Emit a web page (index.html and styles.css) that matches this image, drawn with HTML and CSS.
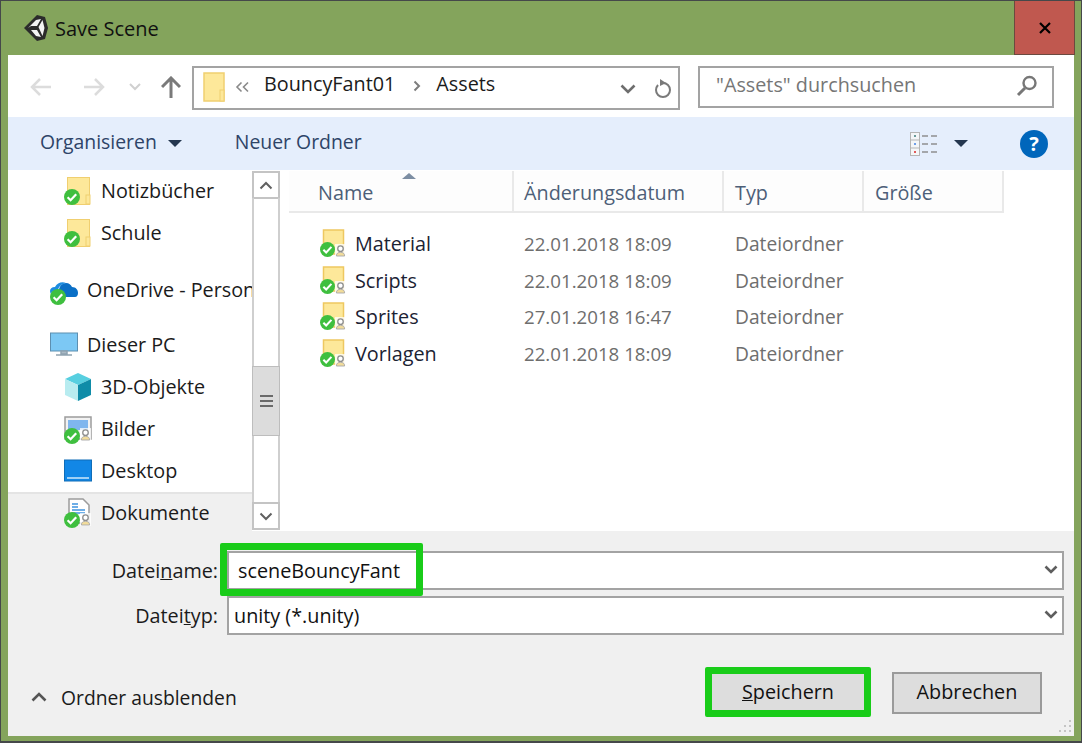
FILE: index.html
```html
<!DOCTYPE html>
<html lang="de">
<head>
    <meta charset="UTF-8">
    <title>Save Scene</title>
    <link rel="stylesheet" href="styles.css">
</head>
<body>

<svg class="defs" width="0" height="0">
    <defs>
        <symbol id="check" viewBox="0 0 16 16">
            <circle cx="8" cy="8" r="8" fill="#3fbf3f"/>
            <path d="M3.6 8.2l3 3 5.6-6" fill="none" stroke="#fff" stroke-width="2.2"/>
        </symbol>
        <symbol id="person" viewBox="0 0 12 14">
            <rect x="0" y="0" width="12" height="14" fill="#fff" opacity=".8"/>
            <circle cx="6" cy="5" r="3" fill="#fff" stroke="#8c8c8c" stroke-width="1.4"/>
            <path d="M1.5 13c0-3 2-4 4.500-4s4.500 1 4.500 4z" fill="#f2dc9a" stroke="#a8a8a8"/>
        </symbol>
        <symbol id="folder-nav" viewBox="0 0 28 30">
            <rect x="3.500" y="1.500" width="22" height="27" fill="#fde89a" stroke="#f0cf70"/>
            <rect x="22" y="19" width="4" height="9" fill="#fde89a" stroke="#f0cf70"/>
            <use href="#check" x="0" y="13" width="16" height="16"/>
        </symbol>
        <symbol id="folder-list" viewBox="0 0 28 30">
            <rect x="4.500" y="1" width="20" height="24" fill="#fde89a" stroke="#eec860" stroke-width="1.500"/>
            <use href="#check" x="1" y="13" width="15" height="15"/>
            <use href="#person" x="16" y="15" width="11" height="13"/>
        </symbol>
    </defs>
</svg>

<div class="window">
    <header class="titlebar">
        <svg class="unity-logo" viewBox="0 0 26 28">
            <path d="M14 1l8 2 3 11-3 11-8 2-13-13z" fill="#2b2b2b"/>
            <path d="M5 14l8-8 5-1-4 7H8zM8 16h6l4 7-5-1zM15.500 13l4-7 2 8-2 8z" fill="#f4f4f4"/>
        </svg>
        <span class="title">Save Scene</span>
        <button class="close-btn">
            <svg viewBox="0 0 12 12" width="12" height="12"><path d="M1 1l10 10M11 1L1 11" stroke="#000" stroke-width="2.200"/></svg>
        </button>
    </header>

    <div class="dialog">
        <div class="navbar">
            <svg class="nav-icon nav-back" viewBox="0 0 22 18"><path d="M21 9H2M10 1L2 9l8 8" fill="none" stroke="#dcdcdc" stroke-width="2.500"/></svg>
            <svg class="nav-icon nav-forward" viewBox="0 0 22 18"><path d="M1 9h19M12 1l8 8-8 8" fill="none" stroke="#dcdcdc" stroke-width="2.500"/></svg>
            <svg class="nav-icon nav-recent" viewBox="0 0 12 8"><path d="M1 1l5 5 5-5" fill="none" stroke="#d0d0d0" stroke-width="2"/></svg>
            <svg class="nav-icon nav-up" viewBox="0 0 20 22"><path d="M10 22V3M1 11l9-9 9 9" fill="none" stroke="#7a7a7a" stroke-width="3"/></svg>

            <div class="address">
                <svg class="address-folder" viewBox="0 0 22 30">
                    <rect x="1" y="1" width="20" height="28" fill="#fde89a" stroke="#f0cf70" stroke-width="1.500"/>
                    <rect x="17" y="18" width="4" height="11" fill="#fde89a" stroke="#f0cf70"/>
                </svg>
                <svg class="crumb-more" viewBox="0 0 15 12"><path d="M6.500 1.500L2 6l4.500 4.500M13 1.500L8.500 6l4.500 4.500" fill="none" stroke="#8a8a8a" stroke-width="1.600"/></svg>
                <span class="crumb">BouncyFant01</span>
                <svg class="crumb-sep" viewBox="0 0 8 12"><path d="M1.500 1.500L6 6l-4.500 4.500" fill="none" stroke="#7d7d7d" stroke-width="2"/></svg>
                <span class="crumb">Assets</span>
                <svg class="address-chevron" viewBox="0 0 16 10"><path d="M1.500 1.500L8 8l6.500-6.500" fill="none" stroke="#6e6e6e" stroke-width="2.600"/></svg>
                <svg class="address-refresh" viewBox="0 0 18 20"><path d="M9 5a7 7 0 1 1-7 7c0-2 .7-3.500 2-5" fill="none" stroke="#7a7a7a" stroke-width="2"/><path d="M6 1l6 4-6 3z" fill="#7a7a7a"/></svg>
            </div>

            <div class="search">
                <span>"Assets" durchsuchen</span>
                <svg class="search-icon" viewBox="0 0 22 22"><circle cx="13.500" cy="8" r="6" fill="none" stroke="#777" stroke-width="2.400"/><path d="M9 13l-7 7" stroke="#777" stroke-width="3"/></svg>
            </div>
        </div>

        <div class="toolbar">
            <span class="tool">Organisieren</span>
            <span class="caret caret-org"></span>
            <span class="tool tool-new">Neuer Ordner</span>
            <svg class="view-icon" viewBox="0 0 28 24">
                <rect x=".5" y=".5" width="9" height="23" fill="#f4f6f8" stroke="#b5b5b5"/>
                <path d="M1 8h8M1 16h8" stroke="#b5b5b5"/>
                <rect x="4" y="3" width="2" height="2" fill="#6a9a9a"/>
                <rect x="4" y="11" width="2" height="2" fill="#6f9ee8"/>
                <rect x="4" y="19" width="2" height="2" fill="#e05a5a"/>
                <path d="M12 4h6M21 4h6M12 12h6M21 12h6M12 20h6M21 20h6" stroke="#8f8f8f" stroke-width="1.500"/>
            </svg>
            <span class="caret caret-view"></span>
            <span class="help">?</span>
        </div>

        <div class="main">
            <nav class="sidebar">
                <div class="side-row sub"><svg class="side-icon"><use href="#folder-nav"/></svg>Notizbücher</div>
                <div class="side-row sub"><svg class="side-icon"><use href="#folder-nav"/></svg>Schule</div>
                <div class="side-row top onedrive">
                    <svg class="side-icon" viewBox="0 0 28 30">
                        <path d="M9 18c-1-6 3-10 7-10 3 0 5 2 6 4 4 0 6 3 6 6 0 2-1 4-3 4H10z" fill="#0a6fc6"/>
                        <path d="M5 12c2-4 7-6 11-4-4 1-7 3-8 7-3 0-6 1-7 4-2-3-1-7 4-7z" fill="#1d8ce0"/>
                        <use href="#check" x="0" y="14" width="16" height="16"/>
                    </svg>OneDrive - Personal
                </div>
                <div class="side-row top pc">
                    <svg class="side-icon" viewBox="0 0 28 30">
                        <rect x="0.500" y="3" width="27" height="18" fill="#7cc8f4" stroke="#5d8fb0"/>
                        <path d="M11 21h6v3h-6zM6 25h16" fill="#a9b8c4" stroke="#8fa2b0" stroke-width="1.500"/>
                    </svg>Dieser PC
                </div>
                <div class="side-row sub">
                    <svg class="side-icon" viewBox="0 0 28 30">
                        <path d="M14 1l13 6-13 6L1 7z" fill="#57cfe0"/>
                        <path d="M1 7l13 6v16L1 23z" fill="#b8ecf0"/>
                        <path d="M27 7l-13 6v16l13-6z" fill="#0f8ca8"/>
                    </svg>3D-Objekte
                </div>
                <div class="side-row sub">
                    <svg class="side-icon" viewBox="0 0 28 30">
                        <rect x="1" y="3" width="26" height="22" fill="#f2f2f2" stroke="#9c9c9c" stroke-width="1.500"/>
                        <rect x="4" y="6" width="20" height="10" fill="#7fb6ee"/>
                        <use href="#person" x="16" y="14" width="11" height="13"/>
                        <use href="#check" x="0" y="14" width="16" height="16"/>
                    </svg>Bilder
                </div>
                <div class="side-row sub">
                    <svg class="side-icon" viewBox="0 0 28 30">
                        <rect x="0.500" y="4" width="27" height="21" fill="#1287e6" stroke="#0f6db8"/>
                        <path d="M3 22h22" stroke="#cfe8fb" stroke-width="1.500"/>
                    </svg>Desktop
                </div>
                <div class="side-row sub selected">
                    <svg class="side-icon" viewBox="0 0 28 30">
                        <path d="M5 1h14l6 6v18H5z" fill="#fff" stroke="#9c9c9c" stroke-width="1.500"/>
                        <path d="M8 6h6M8 9h6M8 12h13M8 15h13" stroke="#3f94e0" stroke-width="1.500"/>
                        <use href="#person" x="16" y="15" width="11" height="13"/>
                        <use href="#check" x="0" y="14" width="16" height="16"/>
                    </svg>Dokumente
                </div>
            </nav>

            <div class="scrollbar">
                <div class="scroll-btn">
                    <svg viewBox="0 0 14 9" width="14" height="9"><path d="M1.500 7.500L7 2l5.500 5.500" fill="none" stroke="#606060" stroke-width="2"/></svg>
                </div>
                <div class="scroll-track">
                    <div class="scroll-thumb"><span></span><span></span><span></span></div>
                </div>
                <div class="scroll-btn">
                    <svg viewBox="0 0 14 9" width="14" height="9"><path d="M1.500 1.500L7 7l5.500-5.500" fill="none" stroke="#606060" stroke-width="2"/></svg>
                </div>
            </div>

            <section class="files">
                <div class="file-grid file-head">
                    <div class="col-head">Name<span class="sort-arrow"></span></div>
                    <div class="col-head col-date">Änderungsdatum</div>
                    <div class="col-head">Typ</div>
                    <div class="col-head">Größe</div>
                </div>
                <div class="file-list">
                    <div class="file-grid file-row">
                        <div class="file-name"><svg class="file-icon"><use href="#folder-list"/></svg>Material</div>
                        <div class="file-meta">22.01.2018 18:09</div>
                        <div class="file-meta file-type">Dateiordner</div>
                    </div>
                    <div class="file-grid file-row">
                        <div class="file-name"><svg class="file-icon"><use href="#folder-list"/></svg>Scripts</div>
                        <div class="file-meta">22.01.2018 18:09</div>
                        <div class="file-meta file-type">Dateiordner</div>
                    </div>
                    <div class="file-grid file-row">
                        <div class="file-name"><svg class="file-icon"><use href="#folder-list"/></svg>Sprites</div>
                        <div class="file-meta">27.01.2018 16:47</div>
                        <div class="file-meta file-type">Dateiordner</div>
                    </div>
                    <div class="file-grid file-row">
                        <div class="file-name"><svg class="file-icon"><use href="#folder-list"/></svg>Vorlagen</div>
                        <div class="file-meta">22.01.2018 18:09</div>
                        <div class="file-meta file-type">Dateiordner</div>
                    </div>
                </div>
            </section>
        </div>

        <div class="bottom">
            <div class="form">
                <label class="form-label">Datei<u>n</u>ame:</label>
                <div class="combo combo-name">sceneBouncyFant
                    <svg class="combo-chevron" viewBox="0 0 14 10"><path d="M1.500 1.500L7 7l5.500-5.500" fill="none" stroke="#5e5e5e" stroke-width="2.600"/></svg>
                </div>
                <label class="form-label">Datei<u>t</u>yp:</label>
                <div class="combo combo-type">unity (*.unity)
                    <svg class="combo-chevron" viewBox="0 0 14 10"><path d="M1.500 1.500L7 7l5.500-5.500" fill="none" stroke="#5e5e5e" stroke-width="2.600"/></svg>
                </div>
            </div>
            <div class="actions">
                <div class="hide-folders">
                    <svg viewBox="0 0 16 10" width="16" height="10"><path d="M1.500 8.500L8 2l6.500 6.500" fill="none" stroke="#555" stroke-width="2.600"/></svg>
                    Ordner ausblenden
                </div>
                <button class="btn btn-save"><u>S</u>peichern</button>
                <button class="btn btn-cancel">Abbrechen</button>
            </div>
            <svg class="grip" viewBox="0 0 14 14"><path d="M12 1h2v2h-2zM7 6h2v2H7zM12 6h2v2h-2zM2 11h2v2H2zM7 11h2v2H7zM12 11h2v2h-2z" fill="#c4c4c4"/></svg>
        </div>
    </div>

    <!-- gruene Markierungen -->
    <div class="callout callout-name"></div>
    <div class="callout callout-save"></div>
</div>

</body>
</html>
```

FILE: styles.css
```css
* {
    box-sizing: border-box;
}

html, body {
    margin: 0;
    padding: 0;
}

body {
    font-family: "Open Sans", "Noto Sans", sans-serif;
    font-size: 19.8px;
    color: #1b1b1b;
    background-color: #84a45c;
}

.defs {
    position: absolute;
}

.window {
    position: relative;
    width: 1082px;
    height: 743px;
    display: flex;
    flex-direction: column;
    background-color: #84a45c;
    border: 1px solid #45484a;
    border-bottom-width: 2px;
    padding: 0 7px 5px 7px;
    overflow: hidden;
}

/* Titelleiste */
.titlebar {
    height: 54px;
    display: flex;
    align-items: center;
    flex-shrink: 0;
    margin-right: -1px;
}

.unity-logo {
    width: 26px;
    height: 28px;
    margin-left: 15px;
}

.title {
    margin-left: 6px;
    font-size: 20px;
    color: #111;
}

.close-btn {
    margin-left: auto;
    width: 61px;
    height: 54px;
    background-color: #c0584f;
    border: 1px solid #6b4a3f;
    border-top: none;
    padding: 0;
    display: flex;
    align-items: center;
    justify-content: center;
}

.dialog {
    flex: 1;
    display: flex;
    flex-direction: column;
    background-color: #fff;
    min-height: 0;
}

/* Navigation */
.navbar {
    height: 62px;
    display: flex;
    align-items: flex-start;
    padding-top: 11px;
    flex-shrink: 0;
}

.nav-icon {
    flex-shrink: 0;
    margin-top: 12px;
}

.nav-back {
    width: 22px;
    height: 18px;
    margin-left: 22px;
}

.nav-forward {
    width: 22px;
    height: 18px;
    margin-left: 31px;
}

.nav-recent {
    width: 12px;
    height: 8px;
    margin-left: 24px;
    margin-top: 17px;
}

.nav-up {
    width: 20px;
    height: 22px;
    margin-left: 20px;
    margin-top: 10px;
}

.address {
    width: 488px;
    height: 44px;
    margin-left: 11px;
    border: 2px solid #a3a3a3;
    display: flex;
    align-items: center;
    padding: 0 0 10px 9px;
}

.address-folder {
    width: 22px;
    height: 30px;
    flex-shrink: 0;
    margin-top: 7px;
}

.crumb-more {
    width: 15px;
    height: 12px;
    margin: 8px 14px 0 10px;
    flex-shrink: 0;
}

.crumb-sep {
    width: 8px;
    height: 12px;
    margin: 6px 15px 0 18px;
}

.address-chevron {
    width: 16px;
    height: 10px;
    margin: 12px 0 0 auto;
}

.address-refresh {
    width: 18px;
    height: 20px;
    margin: 10px 6px 0 18px;
}

.search {
    width: 356px;
    height: 42px;
    margin-left: 18px;
    border: 2px solid #a3a3a3;
    display: flex;
    align-items: center;
    justify-content: space-between;
    padding: 0 14px 5px 16px;
    color: #767676;
}

.search-icon {
    width: 22px;
    height: 22px;
    margin-top: 3px;
}

/* Werkzeugleiste */
.toolbar {
    height: 53px;
    flex-shrink: 0;
    background-color: #e5eefc;
    display: flex;
    align-items: center;
    padding-left: 32px;
    color: #2e4468;
}

.tool {
    position: relative;
    top: -2px;
    font-size: 19.4px;
}

.caret {
    width: 0;
    height: 0;
    border-left: 7px solid transparent;
    border-right: 7px solid transparent;
    border-top: 7px solid #24364f;
}

.caret-org {
    margin-left: 11px;
}

.tool-new {
    margin-left: 53px;
}

.view-icon {
    width: 28px;
    height: 24px;
    margin-left: auto;
}

.caret-view {
    margin-left: 16px;
}

.help {
    width: 28px;
    height: 28px;
    margin: 0 26px 0 52px;
    border-radius: 50%;
    background-color: #0066bb;
    color: #fff;
    font-weight: 700;
    font-size: 20px;
    line-height: 28px;
    text-align: center;
}

/* Hauptbereich */
.main {
    height: 361px;
    flex-shrink: 0;
    display: flex;
    overflow: hidden;
}

.sidebar {
    width: 244px;
    flex-shrink: 0;
    overflow: hidden;
}

.side-row {
    height: 42px;
    display: flex;
    align-items: center;
    white-space: nowrap;
    overflow: hidden;
    padding-bottom: 2px;
}

.side-row.sub {
    padding-left: 56px;
}

.side-row.top {
    padding-left: 42px;
}

.onedrive {
    margin-top: 15px;
}

.pc {
    margin-top: 13px;
}

.selected {
    background-color: #f0f0f0;
    border-top: 2px solid #e4e4e4;
    padding-bottom: 4px;
}

.side-icon {
    width: 28px;
    height: 30px;
    margin: 2px 9px 0 0;
    flex-shrink: 0;
}

.scrollbar {
    width: 29px;
    flex-shrink: 0;
    display: flex;
    flex-direction: column;
    padding: 1px 1px 1px 0;
}

.scroll-btn {
    height: 28px;
    flex-shrink: 0;
    background-color: #fff;
    border: 2px solid #c4c4c4;
    display: flex;
    align-items: center;
    justify-content: center;
}

.scroll-track {
    flex: 1;
    border-left: 2px solid #cfcfcf;
    border-right: 2px solid #cfcfcf;
    padding-top: 168px;
    margin-top: -1px;
    margin-bottom: -1px;
}

.scroll-thumb {
    height: 70px;
    margin: 0 -2px;
    background-color: #dcdcdc;
    border: 1px solid #bdbdbd;
    display: flex;
    flex-direction: column;
    align-items: center;
    justify-content: center;
    gap: 3px;
}

.scroll-thumb span {
    width: 13px;
    height: 2px;
    background-color: #6a6a6a;
}

/* Dateiliste */
.files {
    flex: 1;
    min-width: 0;
    padding-left: 8px;
    padding-top: 1px;
}

.file-grid {
    display: grid;
    grid-template-columns: 225px 210px 140px 140px;
}

.file-head {
    width: 715px;
    height: 42px;
    border-bottom: 2px solid #e9e9e9;
}

.col-head {
    position: relative;
    display: flex;
    align-items: center;
    padding: 3px 0 0 11px;
    background-color: #fdfdfd;
    border-right: 2px solid #e9e9e9;
    color: #4d5f78;
}

.col-head:first-child {
    padding-left: 29px;
}

.col-date {
    padding-left: 10px;
}

.sort-arrow {
    position: absolute;
    left: 113px;
    top: 2px;
    width: 0;
    height: 0;
    border-left: 7px solid transparent;
    border-right: 7px solid transparent;
    border-bottom: 6px solid #7d8ea3;
}

.file-list {
    padding-top: 12px;
}

.file-row {
    height: 36.7px;
    align-items: center;
}

.file-name {
    display: flex;
    align-items: center;
    padding-left: 30px;
    color: #1b2233;
}

.file-icon {
    width: 28px;
    height: 30px;
    margin: 1px 8px 0 0;
    flex-shrink: 0;
}

.file-meta {
    padding-left: 10px;
    font-size: 18.7px;
    color: #6e6e6e;
}

.file-type {
    padding-left: 11px;
    font-size: 19.2px;
}

/* Unterer Bereich */
.bottom {
    position: relative;
    flex: 1;
    background-color: #f0f0f0;
    padding-top: 20px;
}

.form {
    display: grid;
    grid-template-columns: 210px 1fr;
    column-gap: 9px;
    row-gap: 6px;
    padding-right: 10px;
}

.form-label {
    display: flex;
    align-items: center;
    justify-content: flex-end;
    white-space: pre;
}

.combo {
    position: relative;
    height: 39px;
    display: flex;
    align-items: center;
    background-color: #fff;
    border: 2px solid #a3a3a3;
    padding-left: 5px;
    color: #111;
}

.combo-name {
    padding-left: 9px;
}

.combo-chevron {
    position: absolute;
    right: 4px;
    top: 12px;
    width: 14px;
    height: 10px;
}

.actions {
    display: flex;
    align-items: center;
    margin-top: 37px;
    padding-left: 23px;
}

.hide-folders {
    display: flex;
    align-items: center;
    gap: 14px;
    margin-right: auto;
    position: relative;
    top: 4px;
    font-size: 19.3px;
}

.btn {
    height: 42px;
    font: inherit;
    color: #111;
    background-color: #dddddd;
    border: 2px solid #9a9a9a;
    padding: 0 0 4px;
}

.btn-save {
    width: 158px;
    margin-right: 25px;
}

.btn-cancel {
    width: 150px;
    margin-right: 32px;
}

.grip {
    position: absolute;
    right: 3px;
    bottom: 3px;
    width: 14px;
    height: 14px;
}

/* gruene Markierungen */
.callout {
    position: absolute;
    border: 7px solid #19cc19;
    border-radius: 2px;
}

.callout-name {
    left: 219px;
    top: 542px;
    width: 203px;
    height: 53px;
}

.callout-save {
    left: 704px;
    top: 666px;
    width: 166px;
    height: 50px;
}
```
